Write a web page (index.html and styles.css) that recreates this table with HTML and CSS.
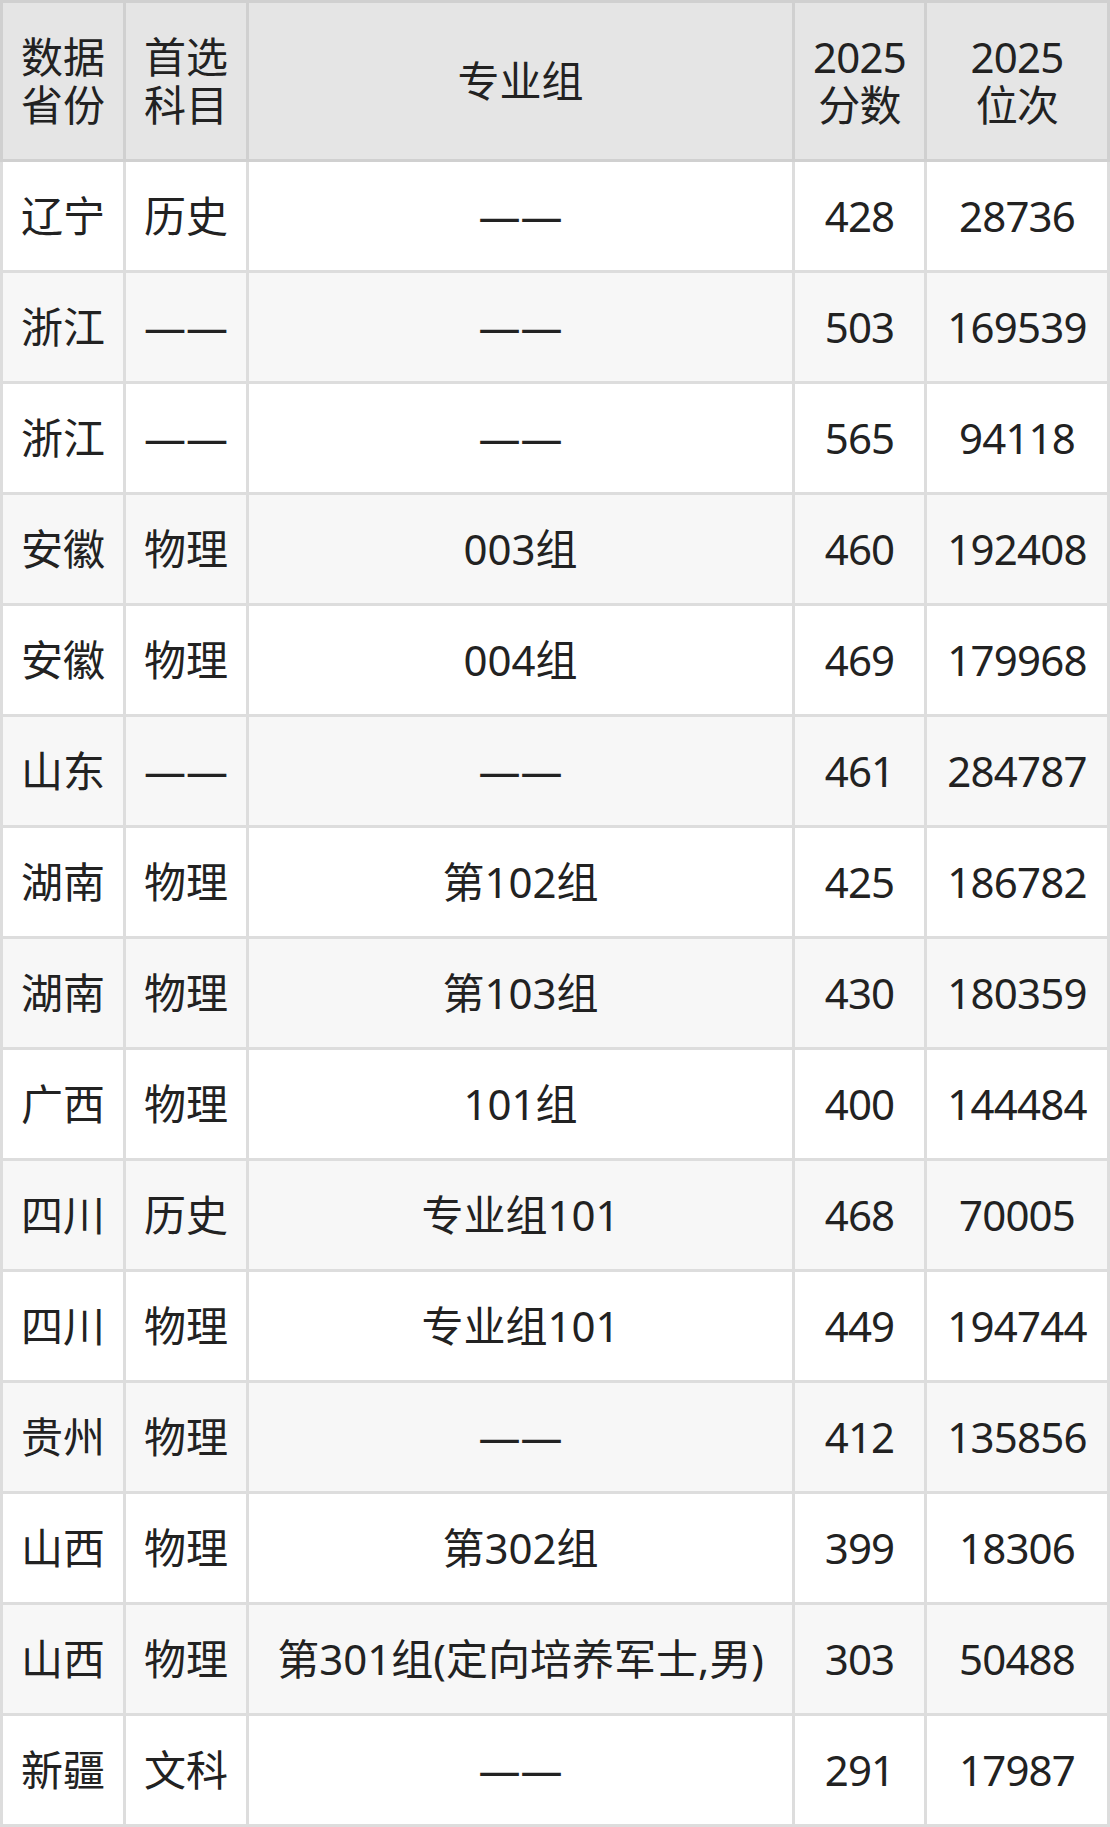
FILE: index.html
```html
<!DOCTYPE html>
<html lang="zh-CN">
<head>
<meta charset="utf-8">
<title>分数位次</title>
<link rel="stylesheet" href="styles.css">
</head>
<body>
<table class="score-table">
  <thead>
    <tr>
      <th class="c-prov">数据<br>省份</th>
      <th class="c-subj">首选<br>科目</th>
      <th class="c-group">专业组</th>
      <th class="c-score">2025<br>分数</th>
      <th class="c-rank">2025<br>位次</th>
    </tr>
  </thead>
  <tbody>
    <tr><td>辽宁</td><td>历史</td><td>——</td><td>428</td><td>28736</td></tr>
    <tr><td>浙江</td><td>——</td><td>——</td><td>503</td><td>169539</td></tr>
    <tr><td>浙江</td><td>——</td><td>——</td><td>565</td><td>94118</td></tr>
    <tr><td>安徽</td><td>物理</td><td>003组</td><td>460</td><td>192408</td></tr>
    <tr><td>安徽</td><td>物理</td><td>004组</td><td>469</td><td>179968</td></tr>
    <tr><td>山东</td><td>——</td><td>——</td><td>461</td><td>284787</td></tr>
    <tr><td>湖南</td><td>物理</td><td>第102组</td><td>425</td><td>186782</td></tr>
    <tr><td>湖南</td><td>物理</td><td>第103组</td><td>430</td><td>180359</td></tr>
    <tr><td>广西</td><td>物理</td><td>101组</td><td>400</td><td>144484</td></tr>
    <tr><td>四川</td><td>历史</td><td>专业组101</td><td>468</td><td>70005</td></tr>
    <tr><td>四川</td><td>物理</td><td>专业组101</td><td>449</td><td>194744</td></tr>
    <tr><td>贵州</td><td>物理</td><td>——</td><td>412</td><td>135856</td></tr>
    <tr><td>山西</td><td>物理</td><td>第302组</td><td>399</td><td>18306</td></tr>
    <tr><td>山西</td><td>物理</td><td>第301组(定向培养军士,男)</td><td>303</td><td>50488</td></tr>
    <tr><td>新疆</td><td>文科</td><td>——</td><td>291</td><td>17987</td></tr>
  </tbody>
</table>
</body>
</html>
```
FILE: styles.css
```css
html, body {
  margin: 0;
  padding: 0;
  background: #ffffff;
}

.score-table {
  width: 1110px;
  table-layout: fixed;
  border-collapse: separate;
  border-spacing: 0;
  font-family: "Noto Sans", "Noto Sans CJK SC", sans-serif;
  font-size: 42px;
  color: #222222;
}

.score-table th,
.score-table td {
  box-sizing: border-box;
  padding: 30px 4px;
  line-height: 48px;
  text-align: center;
  vertical-align: middle;
  font-weight: normal;
  white-space: nowrap;
}

.score-table th {
  background: #e5e5e5;
  border-right: 3px solid #d0d0d0;
  border-bottom: 3px solid #d0d0d0;
  border-top: 3px solid #d0d0d0;
}

.score-table th:first-child {
  border-left: 3px solid #d0d0d0;
}

.score-table td {
  border-right: 3px solid #dddddd;
  border-bottom: 3px solid #dddddd;
}

.score-table td:first-child {
  border-left: 3px solid #dddddd;
}

.score-table th:nth-child(n+4),
.score-table td:nth-child(n+4) {
  letter-spacing: -0.8px;
}

.score-table tbody tr:nth-child(odd) td {
  background: #ffffff;
}

.score-table tbody tr:nth-child(even) td {
  background: #f7f7f7;
}

.c-prov { width: 126px; }
.c-subj { width: 123px; }
.c-group { width: 546px; }
.c-score { width: 132px; }
.c-rank { width: 183px; }
```
